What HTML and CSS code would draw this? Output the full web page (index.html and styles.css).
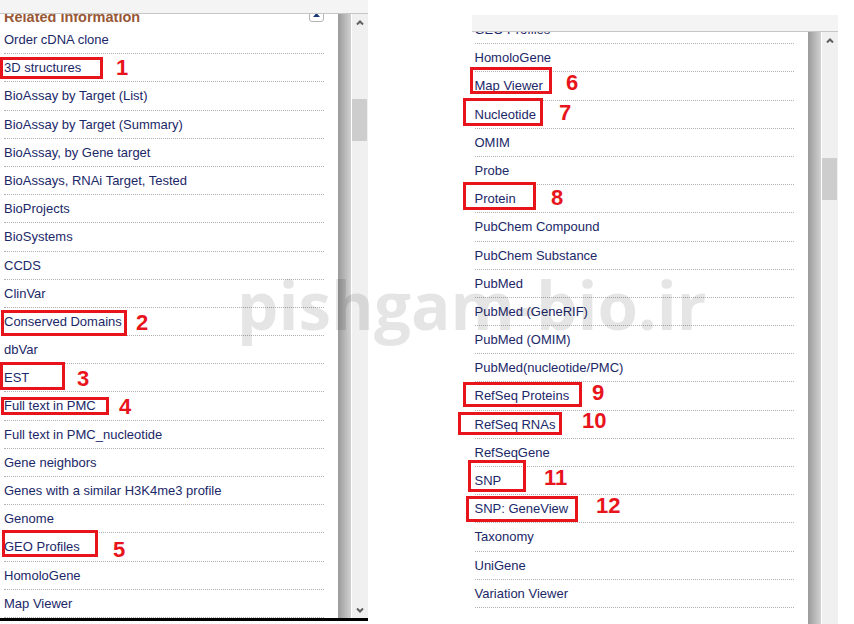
FILE: index.html
```html
<!DOCTYPE html>
<html>
<head>
<meta charset="utf-8">
<title>Related information</title>
<link rel="stylesheet" href="styles.css">
</head>
<body>
<div class="page">
  <section class="panel panel-left">
    <div class="topbar"></div>
    <div class="frame">
      <div class="content">
        <div class="list list-left">
          <div class="head">
            <span class="head-title">Related information</span>
            <span class="toggle"><svg width="7" height="4" viewBox="0 0 7 4"><path d="M0 4 L3.5 0 L7 4 Z" fill="#1b3776"/></svg></span>
          </div>
          <ul class="rows">
            <li>Order cDNA clone</li>
            <li>3D structures</li>
            <li>BioAssay by Target (List)</li>
            <li>BioAssay by Target (Summary)</li>
            <li>BioAssay, by Gene target</li>
            <li>BioAssays, RNAi Target, Tested</li>
            <li>BioProjects</li>
            <li>BioSystems</li>
            <li>CCDS</li>
            <li>ClinVar</li>
            <li>Conserved Domains</li>
            <li>dbVar</li>
            <li>EST</li>
            <li>Full text in PMC</li>
            <li>Full text in PMC_nucleotide</li>
            <li>Gene neighbors</li>
            <li>Genes with a similar H3K4me3 profile</li>
            <li>Genome</li>
            <li>GEO Profiles</li>
            <li>HomoloGene</li>
            <li>Map Viewer</li>
          </ul>
        </div>
      </div>
      <div class="shade"></div>
      <div class="track track-left">
        <span class="arrow"><svg width="8" height="5" viewBox="0 0 8 5"><path d="M1 4.5 L4 1.5 L7 4.5" fill="none" stroke="#5f5f5f" stroke-width="2"/></svg></span>
        <span class="thumb thumb-left"></span>
        <span class="arrow arrow-down"><svg width="8" height="5" viewBox="0 0 8 5"><path d="M1 0.5 L4 3.5 L7 0.5" fill="none" stroke="#5f5f5f" stroke-width="2"/></svg></span>
      </div>
    </div>
  </section>

  <section class="panel panel-right">
    <div class="topbar topbar-right"></div>
    <div class="frame">
      <div class="content">
        <ul class="rows list-right">
          <li>GEO Profiles</li>
          <li>HomoloGene</li>
          <li>Map Viewer</li>
          <li>Nucleotide</li>
          <li>OMIM</li>
          <li>Probe</li>
          <li>Protein</li>
          <li>PubChem Compound</li>
          <li>PubChem Substance</li>
          <li>PubMed</li>
          <li>PubMed (GeneRIF)</li>
          <li>PubMed (OMIM)</li>
          <li>PubMed(nucleotide/PMC)</li>
          <li>RefSeq Proteins</li>
          <li>RefSeq RNAs</li>
          <li>RefSeqGene</li>
          <li>SNP</li>
          <li>SNP: GeneView</li>
          <li>Taxonomy</li>
          <li>UniGene</li>
          <li>Variation Viewer</li>
        </ul>
      </div>
      <div class="shade"></div>
      <div class="track track-right">
        <span class="arrow"><svg width="8" height="5" viewBox="0 0 8 5"><path d="M1 4.5 L4 1.5 L7 4.5" fill="none" stroke="#5f5f5f" stroke-width="2"/></svg></span>
        <span class="thumb thumb-right"></span>
      </div>
    </div>
  </section>

  <div class="marks">
    <span class="box b1"></span><span class="num n1">1</span>
    <span class="box b2"></span><span class="num n2">2</span>
    <span class="box b3"></span><span class="num n3">3</span>
    <span class="box b4"></span><span class="num n4">4</span>
    <span class="box b5"></span><span class="num n5">5</span>
    <span class="box b6"></span><span class="num n6">6</span>
    <span class="box b7"></span><span class="num n7">7</span>
    <span class="box b8"></span><span class="num n8">8</span>
    <span class="box b9"></span><span class="num n9">9</span>
    <span class="box b10"></span><span class="num n10">10</span>
    <span class="box b11"></span><span class="num n11">11</span>
    <span class="box b12"></span><span class="num n12">12</span>
  </div>

  <div class="watermark">pishgam-bio.ir</div>
</div>
</body>
</html>
```

FILE: styles.css
```css
html, body {
  margin: 0;
  padding: 0;
  background: #ffffff;
  overflow: hidden;
}

.page {
  position: relative;
  display: flex;
  align-items: flex-start;
  width: 854px;
  height: 624px;
  font-family: "Liberation Sans", Arial, sans-serif;
}

.panel {
  display: flex;
  flex-direction: column;
}

.panel-left {
  width: 368px;
  height: 618px;
  border-bottom: 3px solid #000;
}

.panel-right {
  width: 366px;
  height: 609px;
  margin-left: 104px;
  margin-top: 15px;
}

.topbar {
  height: 13px;
  background: #f4f4f4;
  border-bottom: 1px solid #c6c6c6;
  flex: none;
  position: relative;
  z-index: 2;
}

.topbar-right {
  height: 16px;
}

.frame {
  flex: 1;
  display: flex;
  min-height: 0;
}

.content {
  flex: 1;
  overflow: hidden;
  min-width: 0;
}

.shade {
  width: 13px;
  flex: none;
  background: linear-gradient(to right, #9a9a9a, #d2d2d2);
  border-right: 1px solid #ffffff;
}

.track {
  width: 16px;
  flex: none;
  background: #f0f0f0;
  display: flex;
  flex-direction: column;
  align-items: center;
  padding-top: 6px;
  box-sizing: border-box;
}

.track-left {
  padding-bottom: 5px;
}

.arrow {
  display: block;
  height: 5px;
  line-height: 0;
}

.arrow svg {
  display: block;
}

.arrow-down {
  margin-top: auto;
}

.thumb {
  display: block;
  width: 15px;
  height: 42px;
  background: #cdcdcd;
  align-self: flex-start;
}

.thumb-left {
  margin-top: 74px;
}

.thumb-right {
  margin-top: 115px;
}

.list-left {
  margin-top: -18px;
}

.head {
  display: flex;
  justify-content: space-between;
  align-items: flex-start;
  height: 30px;
  padding: 0 14px 0 4px;
}

.head-title {
  margin-top: 12px;
  line-height: 18px;
  font-size: 14.5px;
  font-weight: bold;
  color: #985735;
}

.toggle {
  margin-top: 11px;
  width: 13px;
  height: 13px;
  border: 1px solid #b4b4b4;
  border-radius: 3px;
  background: #fff;
  display: flex;
  align-items: center;
  justify-content: center;
}

.toggle svg {
  display: block;
}

.rows {
  list-style: none;
  margin: 0 14px 0 4px;
  padding: 0;
}

.list-right {
  margin: -16px 14px 0 2.5px;
}

.rows li {
  height: 27.2px;
  line-height: 27.2px;
  font-size: 13px;
  color: #1b2868;
  border-bottom: 1px dotted #b0b0b0;
  white-space: nowrap;
}

/* annotation overlay */
.marks {
  position: absolute;
  inset: 0;
  pointer-events: none;
  z-index: 5;
}

.box {
  position: absolute;
  border: 3px solid #e8141c;
  box-sizing: border-box;
}

.num {
  position: absolute;
  font-family: "Liberation Sans", Arial, sans-serif;
  font-weight: bold;
  font-size: 22px;
  line-height: 22px;
  color: #e8141c;
}

.b1 { left: 0; top: 57px; width: 103px; height: 22px; }
.b2 { left: 1px; top: 310px; width: 126px; height: 26px; }
.b3 { left: 0; top: 362px; width: 65px; height: 28px; }
.b4 { left: 1px; top: 397px; width: 108px; height: 18px; }
.b5 { left: 2px; top: 530px; width: 96px; height: 27px; }
.b6 { left: 470px; top: 67px; width: 82px; height: 27px; }
.b7 { left: 463px; top: 98px; width: 80px; height: 28px; }
.b8 { left: 463px; top: 182px; width: 73px; height: 28px; }
.b9 { left: 463px; top: 382px; width: 119px; height: 25px; }
.b10 { left: 458px; top: 412px; width: 104px; height: 23px; }
.b11 { left: 468px; top: 460px; width: 58px; height: 32px; }
.b12 { left: 466px; top: 496px; width: 112px; height: 26px; }

.n1 { left: 116px; top: 57px; }
.n2 { left: 136px; top: 312px; }
.n3 { left: 77px; top: 368px; }
.n4 { left: 119px; top: 396px; }
.n5 { left: 113px; top: 539px; }
.n6 { left: 566px; top: 72px; }
.n7 { left: 559px; top: 102px; }
.n8 { left: 551px; top: 187px; }
.n9 { left: 592px; top: 382px; }
.n10 { left: 582px; top: 410px; }
.n11 { left: 544px; top: 467px; }
.n12 { left: 596px; top: 495px; }

.watermark {
  position: absolute;
  left: 237px;
  top: 271px;
  font-family: "Open Sans", "Liberation Sans", sans-serif;
  font-weight: bold;
  font-size: 65.5px;
  line-height: 67px;
  color: rgba(0, 0, 0, 0.1);
  white-space: nowrap;
  pointer-events: none;
  z-index: 4;
}
```
